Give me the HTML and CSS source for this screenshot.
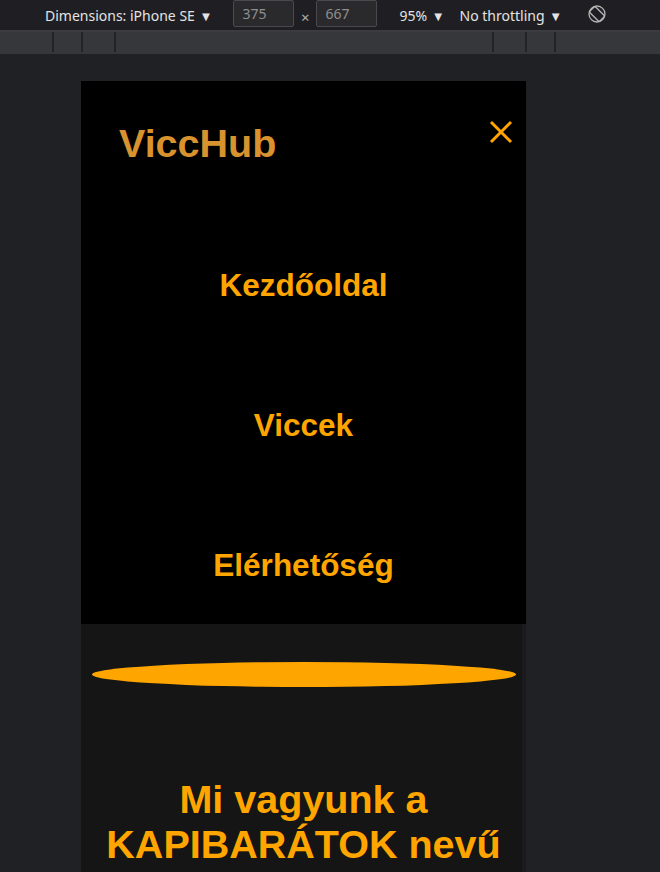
FILE: index.html
```html
<!DOCTYPE html>
<html lang="hu">
<head>
<meta charset="utf-8">
<title>ViccHub</title>
<link rel="stylesheet" href="styles.css">
</head>
<body>
<div class="toolbar">
  <span class="tb-item dims">Dimensions: iPhone SE <span class="caret">▼</span></span>
  <span class="tb-input first">375</span>
  <span class="tb-times">×</span>
  <span class="tb-input">667</span>
  <span class="tb-item zoom">95% <span class="caret">▼</span></span>
  <span class="tb-item throttle">No throttling <span class="caret">▼</span></span>
  <svg class="rotate" width="20" height="20" viewBox="0 0 20 20">
    <g fill="none" stroke="#b5b5b5" stroke-width="1.3">
      <circle cx="10" cy="10" r="8"/>
      <rect x="6" y="3" width="8" height="14" rx="1.5" transform="rotate(-45 10 10)"/>
    </g>
  </svg>
</div>
<div class="divider"></div>
<div class="ruler">
  <span class="seg s1"></span>
  <span class="seg s2"></span>
  <span class="seg s3"></span>
  <span class="seg s4"></span>
  <span class="seg s5"></span>
  <span class="seg s6"></span>
  <span class="seg s7"></span>
</div>
<div class="device">
  <nav class="menu">
    <div class="menu-head">
      <h1 class="logo">ViccHub</h1>
      <svg class="close" width="24" height="24" viewBox="0 0 24 24">
        <path d="M2 2 L22 22 M22 2 L2 22" stroke="#ffa500" stroke-width="3" fill="none"/>
      </svg>
    </div>
    <ul class="links">
      <li><a href="#">Kezdőoldal</a></li>
      <li><a href="#">Viccek</a></li>
      <li><a href="#">Elérhetőség</a></li>
    </ul>
  </nav>
  <main class="content">
    <div class="ellipse"></div>
    <h2 class="intro">Mi vagyunk a KAPIBARÁTOK nevű</h2>
  </main>
</div>
</body>
</html>
```
FILE: styles.css
```css
html, body {
  margin: 0;
  padding: 0;
}
body {
  width: 660px;
  height: 872px;
  overflow: hidden;
  background: #202124;
  font-family: "Noto Sans", "Open Sans", sans-serif;
}
.toolbar {
  height: 30px;
  background: #1f1f23;
  display: flex;
  align-items: center;
  color: #e3e3e3;
  font-size: 14px;
}
.caret {
  font-size: 13px;
  margin-left: 1px;
}
.dims {
  margin-left: 45px;
}
.tb-input {
  box-sizing: border-box;
  width: 61px;
  height: 27px;
  margin-top: -3px;
  border: 1px solid #4a4a4e;
  border-radius: 2px;
  background: #2a2a2d;
  color: #8f8f8f;
  padding-left: 8px;
  line-height: 25px;
}
.tb-input.first {
  margin-left: 21px;
}
.tb-times {
  width: 22px;
  text-align: center;
  color: #b0b0b0;
  font-size: 15px;
  margin-top: 4px;
}
.zoom {
  margin-left: 22px;
}
.throttle {
  margin-left: 15px;
}
.rotate {
  margin-left: 25px;
  margin-top: -3px;
}
.divider {
  height: 2px;
  background: #3b3c40;
}
.ruler {
  display: flex;
  height: 22px;
  background: #36373b;
}
.seg {
  height: 20px;
  box-sizing: border-box;
  border-right: 2px solid #232326;
}
.s1 { width: 54px; }
.s2 { width: 29px; }
.s3 { width: 33px; }
.s4 { width: 378px; }
.s5 { width: 33px; }
.s6 { width: 29px; }
.s7 { flex: 1; border-right: none; }
.device {
  margin: 27px 0 0 81px;
  width: 445px;
  font-family: "Liberation Sans", Arial, sans-serif;
}
.menu {
  height: 543px;
  background: #000;
}
.menu-head {
  display: flex;
  justify-content: space-between;
  align-items: flex-start;
  padding: 39px 13px 0 38px;
}
.logo {
  margin: 0;
  font-size: 39.5px;
  line-height: 46px;
  font-weight: bold;
  color: #d8922e;
}
.close {
  display: block;
}
.links {
  list-style: none;
  margin: 99px 0 0;
  padding: 0;
  display: flex;
  flex-direction: column;
  gap: 100px;
  text-align: center;
}
.links a {
  display: block;
  color: #ffa500;
  text-decoration: none;
  font-weight: bold;
  font-size: 31.5px;
  line-height: 40px;
}
.content {
  background: #151515;
  height: 248px;
  overflow: hidden;
  box-sizing: border-box;
  padding-top: 38px;
  border-right: 4px solid #1b1b1d;
}
.ellipse {
  height: 25px;
  margin: 0 6px 0 11px;
  background: #ffa500;
  border-radius: 50%;
}
.intro {
  margin: 90px 0 0;
  font-size: 39.5px;
  line-height: 45px;
  font-weight: bold;
  color: #ffa500;
  text-align: center;
  padding-left: 4px;
}
```
